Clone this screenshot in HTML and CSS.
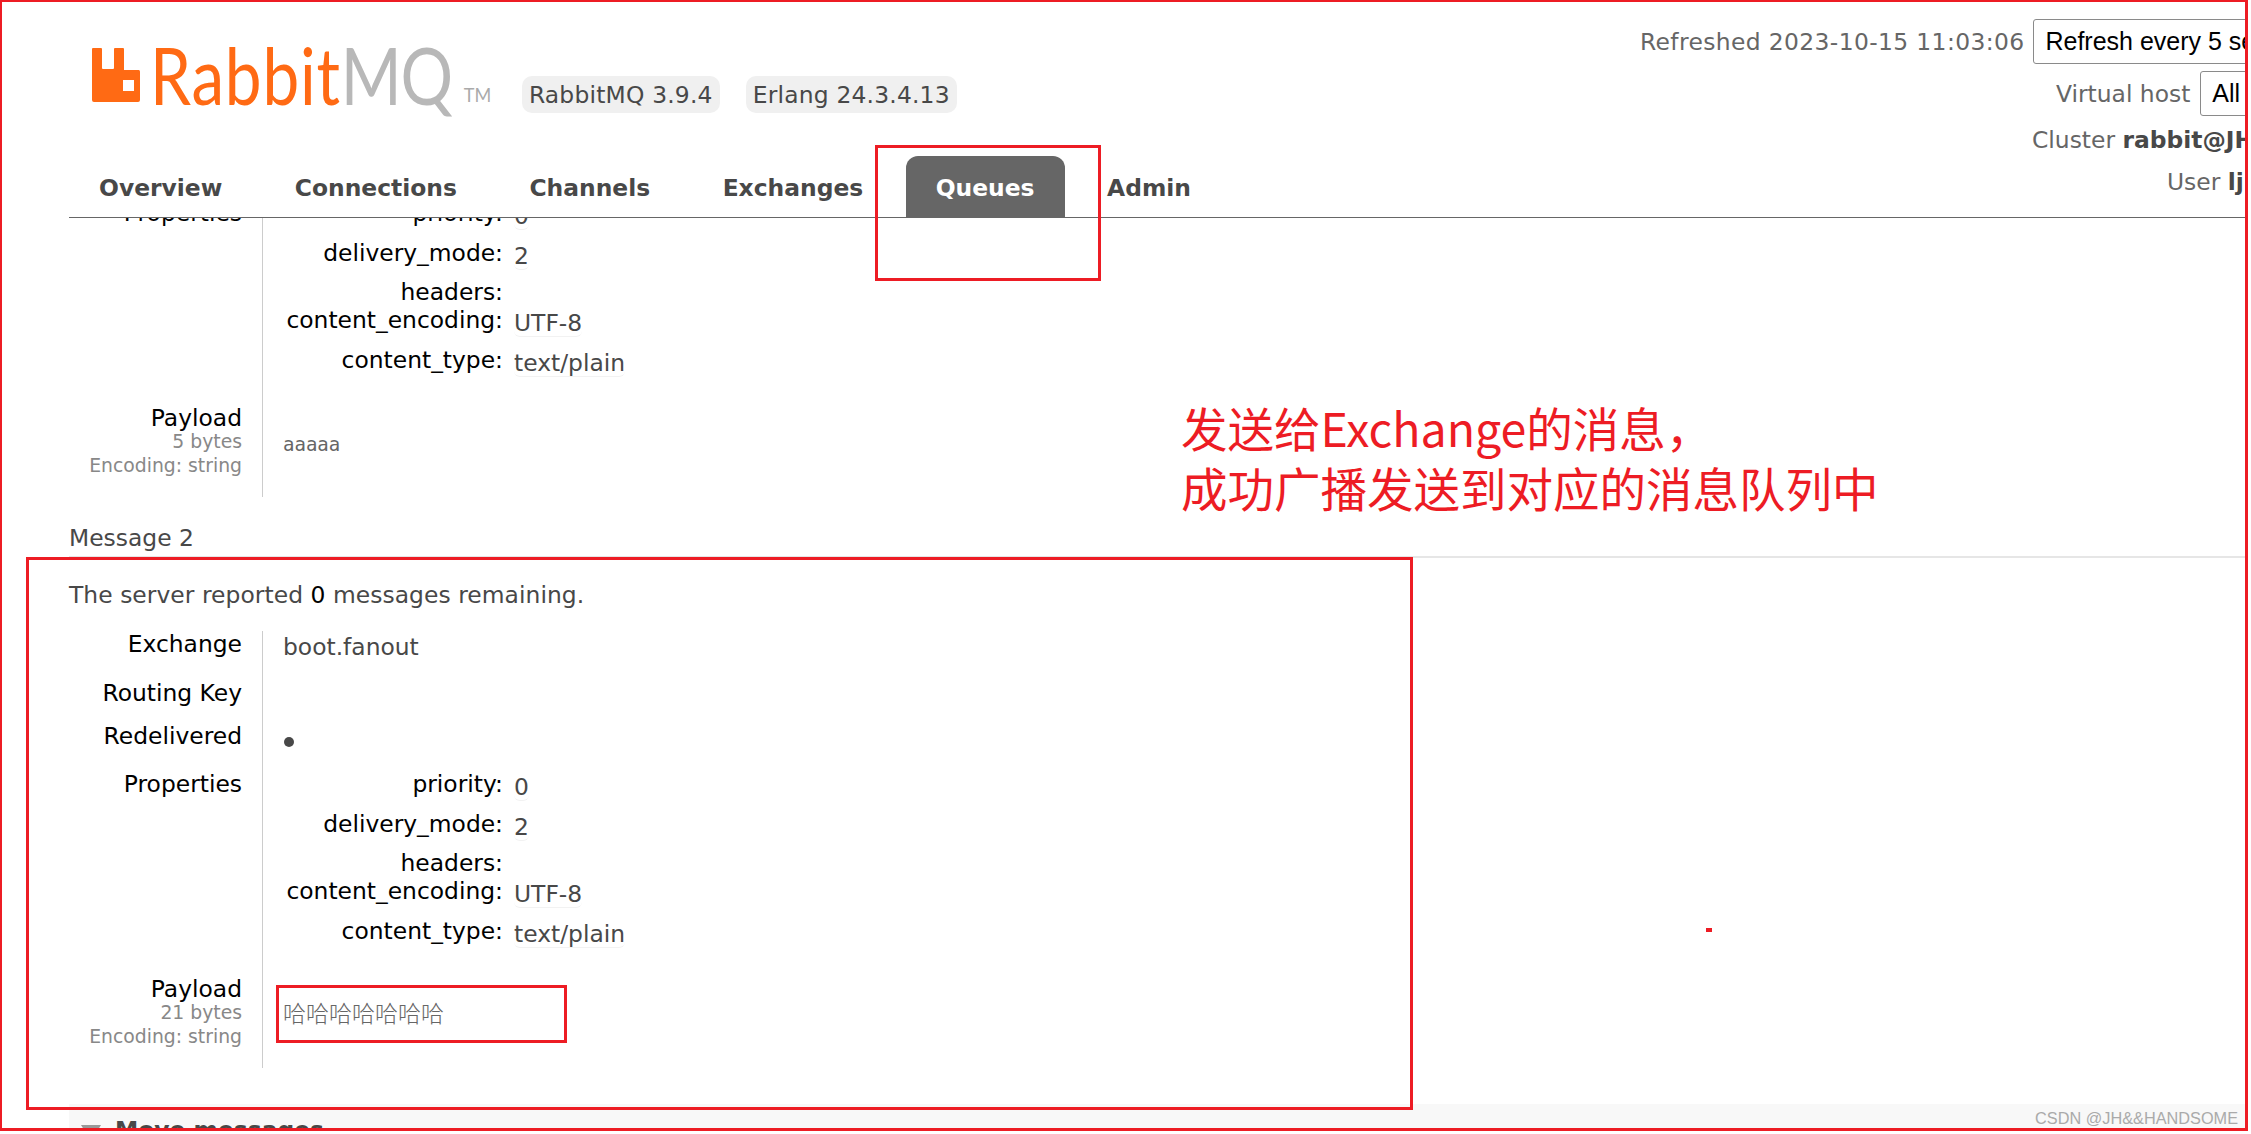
FILE: index.html
```html
<!DOCTYPE html>
<html lang="zh">
<head>
<meta charset="utf-8">
<title>RabbitMQ Management</title>
<link rel="stylesheet" href="styles.css">
</head>
<body>
<div class="shot">
  <header class="header">
    <div class="brand-col">
      <div class="brand">
        <svg class="logo-icon" viewBox="0 0 50 54" width="50" height="54" aria-hidden="true">
          <path fill="#ff6a14" fill-rule="evenodd" d="M1 0h8a1 1 0 0 1 1 1v19a1 1 0 0 0 1 1h10a1 1 0 0 0 1-1V1a1 1 0 0 1 1-1h8a1 1 0 0 1 1 1v21h15a2 2 0 0 1 1 2v28a2 2 0 0 1-2 2H2a2 2 0 0 1-2-2V1a1 1 0 0 1 1-1zM31 32v11h11V32z"/>
        </svg>
        <span class="wordmark"><span class="wm-inner"><span class="wm-orange">Rabbit</span><span class="wm-gray">MQ</span></span></span>
        <span class="tm">TM</span>
        <span class="pill pill-first">RabbitMQ 3.9.4</span>
        <span class="pill">Erlang 24.3.4.13</span>
      </div>
      <nav class="nav">
        <a class="tab">Overview</a>
        <a class="tab">Connections</a>
        <a class="tab">Channels</a>
        <a class="tab">Exchanges</a>
        <a class="tab tab-active">Queues</a>
        <a class="tab">Admin</a>
      </nav>
    </div>
    <div class="login">
      <div class="login-row row-refresh"><span class="stamp">Refreshed 2023-10-15 11:03:06</span><span class="select select-refresh">Refresh every 5 seconds</span></div>
      <div class="login-row row-vhost"><span>Virtual host</span><span class="select select-vhost">All</span></div>
      <div class="login-row row-cluster"><span>Cluster <b>rabbit@JH</b></span></div>
      <div class="login-row row-user"><span>User <b>ljh</b></span></div>
    </div>
  </header>

  <main class="main">
    <section class="msg msg-scrolled">
      <div class="row row-props">
        <div class="k">Properties</div>
        <div class="v">
          <div class="props">
            <div class="pk h40">priority:</div><div class="pv"><span class="val">0</span></div>
            <div class="pk h39">delivery_mode:</div><div class="pv"><span class="val">2</span></div>
            <div class="pk h28">headers:</div><div class="pv"></div>
            <div class="pk h40">content_encoding:</div><div class="pv"><span class="val">UTF-8</span></div>
            <div class="pk h58">content_type:</div><div class="pv"><span class="val">text/plain</span></div>
          </div>
        </div>
      </div>
      <div class="row row-payload">
        <div class="k">Payload<small>5 bytes</small><small>Encoding: string</small></div>
        <div class="v"><pre class="payload payload-mono">aaaaa</pre></div>
      </div>
    </section>

    <h3 class="msg-title">Message 2</h3>
    <p class="remaining">The server reported <b class="num">0</b> messages remaining.</p>

    <section class="msg">
      <div class="row row-exchange"><div class="k">Exchange</div><div class="v"><span class="plain">boot.fanout</span></div></div>
      <div class="row row-routing"><div class="k">Routing Key</div><div class="v"></div></div>
      <div class="row row-redelivered"><div class="k">Redelivered</div><div class="v"><span class="dot"></span></div></div>
      <div class="row row-props">
        <div class="k">Properties</div>
        <div class="v">
          <div class="props">
            <div class="pk h40">priority:</div><div class="pv"><span class="val">0</span></div>
            <div class="pk h39">delivery_mode:</div><div class="pv"><span class="val">2</span></div>
            <div class="pk h28">headers:</div><div class="pv"></div>
            <div class="pk h40">content_encoding:</div><div class="pv"><span class="val">UTF-8</span></div>
            <div class="pk h58">content_type:</div><div class="pv"><span class="val">text/plain</span></div>
          </div>
        </div>
      </div>
      <div class="row row-payload">
        <div class="k">Payload<small>21 bytes</small><small>Encoding: string</small></div>
        <div class="v"><pre class="payload payload-han">哈哈哈哈哈哈哈</pre></div>
      </div>
    </section>

    <section class="move">
      <span class="triangle"></span><h2 class="move-title">Move messages</h2>
    </section>
  </main>

  <div class="note">发送给Exchange的消息，<br>成功广播发送到对应的消息队列中</div>
  <div class="mark mark-queues"></div>
  <div class="mark mark-message"></div>
  <div class="mark mark-payload"></div>
  <div class="speck"></div>
  <div class="watermark">CSDN @JH&amp;&amp;HANDSOME</div>
</div>
<div class="frame"></div>
</body>
</html>
```
FILE: styles.css
```css
* { box-sizing: border-box; }
html, body { margin: 0; padding: 0; background: #fff; }
body {
  width: 2251px;
  height: 1134px;
  overflow: hidden;
  position: relative;
  font-family: "DejaVu Sans", Verdana, sans-serif;
  font-size: 23.4px;
  color: #484848;
}
.shot {
  position: relative;
  width: 2245px;
  height: 1128px;
  overflow: hidden;
  background: #fff;
}
.frame {
  position: absolute;
  z-index: 5;
  left: 0;
  top: 0;
  width: 2248px;
  height: 1131px;
  border: 3px solid #ed1c24;
  border-top-width: 2px;
  border-left-width: 2px;
  pointer-events: none;
}

/* header */
.header {
  display: flex;
  justify-content: space-between;
  height: 218px;
  margin-left: 69px;
  border-bottom: 1px solid #666;
  position: relative;
  background: #fff;
  z-index: 2;
}
.brand-col { display: flex; flex-direction: column; }
.brand {
  display: flex;
  align-items: flex-start;
  height: 156px;
  padding: 48px 0 0 23px;
}
.logo-icon { flex: none; margin-right: 8px; }
.wordmark {
  width: 306px;
  height: 54px;
  line-height: 52px;
  white-space: nowrap;
}
.wm-inner {
  display: inline-block;
  font-family: Lato, "Open Sans", sans-serif;
  font-weight: 400;
  font-size: 80px;
  transform: scaleX(0.82);
  transform-origin: left center;
}
.wm-orange { color: #ff6a14; letter-spacing: 1px; }
.wm-gray { color: #b8b8b8; letter-spacing: -1.5px; }
.tm {
  font-family: Lato, sans-serif;
  font-weight: 400;
  font-size: 19px;
  line-height: 14px;
  margin: 40px 0 0 7px;
  color: #aaa;
  transform: scaleX(0.95);
}
.pill {
  margin: 28px 0 0 26px;
  padding: 0 7px;
  height: 37px;
  line-height: 39px;
  background: #f0f0f0;
  border-radius: 10px;
  white-space: nowrap;
  letter-spacing: 0.2px;
  color: #484848;
}
.pill-first { margin-left: 30px; }
.nav { display: flex; gap: 12.5px; padding-left: 0; height: 61px; }
.tab {
  display: block;
  padding: 19px 30px 0;
  height: 61px;
  font-weight: 700;
  line-height: 26px;
  color: #484848;
  border-radius: 12px 12px 0 0;
}
.tab-active { background: #666; color: #fff; }

.login {
  width: 605px;
  flex: none;
  color: #666;
  overflow: hidden;
}
.login-row { display: flex; align-items: center; white-space: nowrap; }
.login-row b { color: #484848; }
.stamp { letter-spacing: 0.38px; }
.row-refresh { padding-top: 19px; height: 64px; gap: 9px; }
.row-vhost { margin-top: 7px; height: 45px; padding-left: 416px; gap: 10px; }
.row-cluster { margin-top: 11px; height: 26px; padding-left: 392px; }
.row-user { margin-top: 16px; height: 26px; padding-left: 527px; }
.select {
  display: block;
  flex: none;
  height: 45px;
  line-height: 43px;
  padding: 0 11px;
  border: 1px solid #8a8a8a;
  border-radius: 3px;
  font-family: "Liberation Sans", Arial, sans-serif;
  font-size: 25px;
  color: #000;
}
.select-refresh { width: 300px; }
.select-vhost { width: 120px; }

/* main */
.main { margin: 0 0 0 69px; position: relative; z-index: 1; }
.msg-scrolled { margin-top: -18px; }
.row { display: grid; grid-template-columns: 193px 1fr; }
.k {
  padding-right: 20px;
  text-align: right;
  color: #000;
  line-height: 26px;
}
.k small {
  display: block;
  font-size: 18.8px;
  line-height: 24px;
  color: #888;
}
.k small:first-of-type { margin-top: -1px; }
.v { border-left: 1px solid #ccc; padding-left: 20px; line-height: 26px; }
.row-exchange { height: 49px; }
.row-routing { height: 43px; }
.row-redelivered { height: 48px; }
.row-props { height: 205px; }
.row-payload { height: 92px; }
.plain { display: block; padding-top: 3px; }
.dot {
  display: block;
  width: 10px;
  height: 10px;
  margin: 14px 0 0 1px;
  border-radius: 50%;
  background: #484848;
}
.props { display: grid; grid-template-columns: 220px 1fr; column-gap: 11px; }
.pk { text-align: right; color: #000; line-height: 26px; }
.h40 { height: 40px; }
.h39 { height: 39px; }
.h28 { height: 28px; }
.h58 { height: 58px; }
.val {
  display: inline-block;
  line-height: 26px;
  padding-top: 3px;
  border-bottom: 1px solid #f2f2f2;
  border-radius: 6px;
  color: #484848;
}
.payload { margin: 0; color: #666; white-space: pre; }
.payload-mono {
  padding-top: 26px;
  font-family: "DejaVu Sans Mono", "Liberation Mono", monospace;
  font-size: 19px;
  line-height: 26px;
}
.payload-han {
  padding-top: 23px;
  font-family: "Noto Sans CJK SC", sans-serif;
  font-size: 23px;
  font-weight: 300;
  line-height: 26px;
  color: #666;
}
.msg-title {
  margin: 28px 0 0;
  height: 33px;
  font-size: 23.4px;
  font-weight: 400;
  line-height: 26px;
  border-bottom: 2px solid #e6e6e6;
  color: #484848;
}
.remaining { margin: 24px 0 23px; line-height: 26px; letter-spacing: 0.05px; color: #484848; }
.num { font-weight: 400; color: #000; }
.move {
  display: flex;
  align-items: flex-start;
  margin-top: 36px;
  height: 60px;
  padding: 13px 0 0 12px;
  background: #f8f8f8;
}
.triangle {
  width: 0;
  height: 0;
  margin: 8px 14px 0 0;
  border-left: 10px solid transparent;
  border-right: 10px solid transparent;
  border-top: 16px solid #999;
}
.move-title { margin: 0; font-size: 23.4px; line-height: 26px; font-weight: 700; color: #484848; }

/* annotations */
.note {
  position: absolute;
  left: 1181px;
  top: 397px;
  z-index: 3;
  font-family: "Noto Sans CJK SC", sans-serif;
  font-size: 46.5px;
  line-height: 60px;
  color: #ed1c24;
  white-space: nowrap;
}
.mark { position: absolute; z-index: 3; border: 3px solid #ed1c24; }
.mark-queues { left: 875px; top: 145px; width: 226px; height: 136px; }
.mark-message { left: 26px; top: 557px; width: 1387px; height: 553px; }
.mark-payload { left: 276px; top: 985px; width: 291px; height: 58px; }
.speck { position: absolute; z-index: 3; left: 1706px; top: 928px; width: 6px; height: 4px; background: #ed1c24; }
.watermark {
  position: absolute;
  z-index: 3;
  right: 7px;
  top: 1107px;
  font-family: "Liberation Sans", Arial, sans-serif;
  font-size: 16.3px;
  line-height: 22px;
  color: #aaa;
  white-space: nowrap;
}
```
